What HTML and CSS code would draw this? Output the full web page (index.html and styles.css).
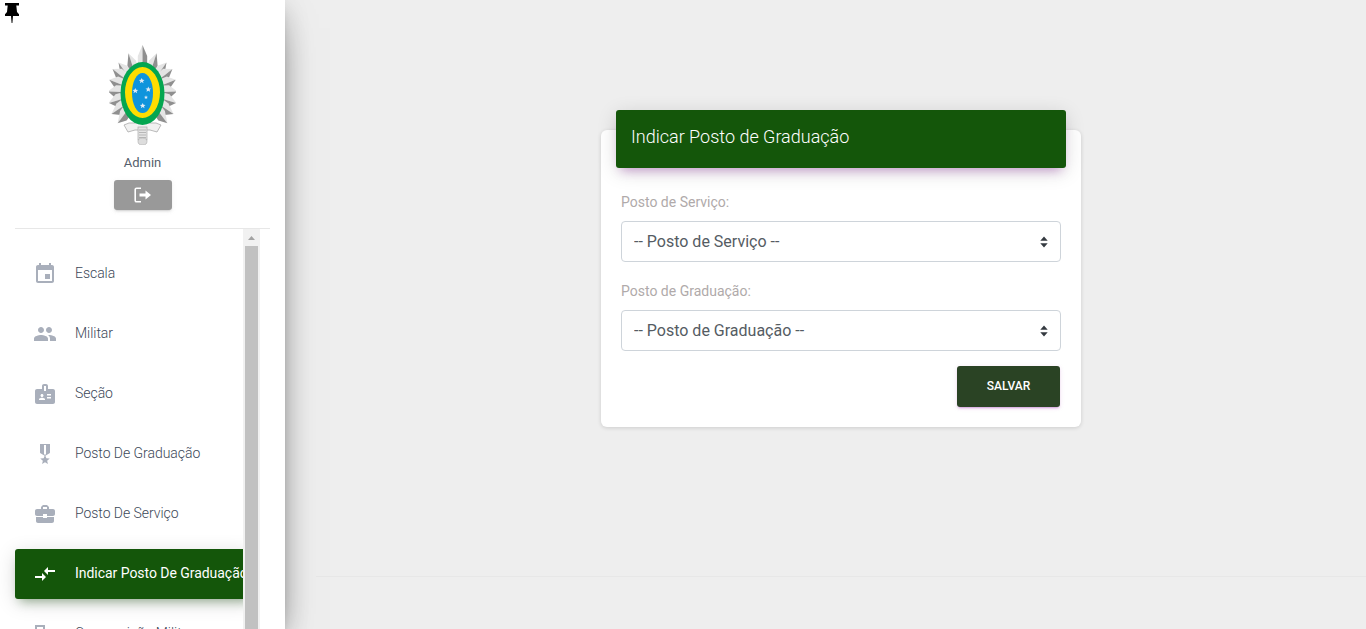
FILE: index.html
```html
<!DOCTYPE html>
<html lang="pt-BR">
<head>
<meta charset="utf-8">
<title>Indicar Posto de Graduação</title>
<link rel="stylesheet" href="styles.css">
</head>
<body>
<aside class="sidebar">
  <svg class="pin" viewBox="0 0 14 20" aria-hidden="true"><path d="M0 0h14v2.500h-2.700l.7 6.500 2 2.300v1.700H8L7.400 20H6.600L6 13H0v-1.700L2 9l.7-6.500H0z"/></svg>
  <div class="profile">
    <svg class="crest" viewBox="0 0 67 100" aria-hidden="true">
      <defs>
        <g id="ray"><polygon points="0,-48 -6.500,-37 -6.500,-29 0,-29" fill="#e4e4e4"/><polygon points="0,-48 6.500,-37 6.500,-29 0,-29" fill="#8f8f8f"/></g>
        <g id="rays-side">
          <use href="#ray" transform="translate(0 4) rotate(24)"/><use href="#ray" transform="translate(0 4) rotate(44)"/><use href="#ray" transform="rotate(60)"/>
          <use href="#ray" transform="rotate(74)"/><use href="#ray" transform="rotate(88)"/><use href="#ray" transform="rotate(102)"/>
          <use href="#ray" transform="rotate(116)"/><use href="#ray" transform="translate(0 -3) rotate(134)"/>
        </g>
        <polygon id="star" points="0,-2.800 .85,-.9 2.800,-.8 1.300,.5 1.800,2.500 0,1.400 -1.800,2.500 -1.300,.5 -2.800,-.8 -.85,-.9" fill="#dfeaf5"/>
      </defs>
      <path d="M20 78h27l5 2-4 7-7-2H26l-7 2-4-7z" fill="#f1f1f1" stroke="#a9a9a9" stroke-width=".8"/>
      <rect x="29" y="82" width="9" height="13" fill="#e4e4e4" stroke="#aaa" stroke-width=".7"/>
      <path d="M30 85h7M30 87.500h7M30 90h7M30 92.500h7" stroke="#999" stroke-width=".6"/>
      <ellipse cx="33.500" cy="96.500" rx="4.500" ry="3.500" fill="#ddd" stroke="#aaa" stroke-width=".6"/>
      <g transform="translate(33.500 48) scale(.72 1)">
        <use href="#ray"/>
        <use href="#rays-side"/>
        <use href="#rays-side" transform="scale(-1 1)"/>
      </g>
      <ellipse cx="33.500" cy="48.500" rx="22" ry="31.500" fill="#03a650"/>
      <ellipse cx="33.500" cy="47.500" rx="17.500" ry="25.500" fill="#fedd00"/>
      <ellipse cx="33.500" cy="48" rx="10.500" ry="20" fill="#0f94dc"/>
      <use href="#star" transform="translate(32.700 35.700)"/>
      <use href="#star" transform="translate(26.300 45.700)"/>
      <use href="#star" transform="translate(39.300 44.300)"/>
      <use href="#star" transform="translate(37 52.300) scale(.7)"/>
      <use href="#star" transform="translate(33.700 60.700)"/>
    </svg>
    <p class="profile-name">Admin</p>
    <button class="logout" type="button" aria-label="Sair">
      <svg viewBox="0 0 18 16" aria-hidden="true"><path class="logout-door" d="M7 1.200H2.600A1.400 1.400 0 0 0 1.200 2.600v10.800a1.400 1.400 0 0 0 1.400 1.400H7"/><path class="logout-arrow" d="M5.500 6.500h6V3.400L17 8l-5.500 4.600V9.500h-6z"/></svg>
    </button>
  </div>
  <div class="nav-wrap">
    <nav class="nav">
      <a class="nav-item"><svg class="nav-icon" viewBox="0 0 24 24"><path d="M17 12h-5v5h5v-5zM16 1v2H8V1H6v2H5c-1.110 0-1.990.9-1.990 2L3 19c0 1.100.89 2 2 2h14c1.100 0 2-.9 2-2V5c0-1.100-.9-2-2-2h-1V1h-2zm3 18H5V8h14v11z"/></svg><span>Escala</span></a>
      <a class="nav-item"><svg class="nav-icon" viewBox="0 0 24 24"><path d="M16 11c1.660 0 2.990-1.340 2.990-3S17.660 5 16 5c-1.660 0-3 1.340-3 3s1.340 3 3 3zm-8 0c1.660 0 2.990-1.340 2.990-3S9.660 5 8 5C6.340 5 5 6.340 5 8s1.340 3 3 3zm0 2c-2.330 0-7 1.170-7 3.500V19h14v-2.500c0-2.330-4.670-3.500-7-3.500zm8 0c-.29 0-.62.02-.97.05 1.160.84 1.970 1.970 1.970 3.450V19h6v-2.500c0-2.330-4.670-3.500-7-3.500z"/></svg><span>Militar</span></a>
      <a class="nav-item"><svg class="nav-icon" viewBox="0 0 24 24"><path d="M20 7h-5V4c0-1.100-.9-2-2-2h-2c-1.100 0-2 .9-2 2v3H4c-1.100 0-2 .9-2 2v11c0 1.100.9 2 2 2h16c1.100 0 2-.9 2-2V9c0-1.100-.9-2-2-2zM9 12c.83 0 1.500.67 1.500 1.500S9.830 15 9 15s-1.500-.67-1.500-1.500S8.170 12 9 12zm3 6H6v-.75c0-1 2-1.500 3-1.500s3 .5 3 1.500V18zm1-9h-2V4h2v5zm5 7.500h-4V15h4v1.500zm0-3h-4V12h4v1.500z"/></svg><span>Seção</span></a>
      <a class="nav-item"><svg class="nav-icon" viewBox="0 0 24 24"><path d="M17 10.430V2H7v8.430c0 .35.18.68.49.86l4.180 2.510-.99 2.340-3.410.29 2.590 2.240L9.070 22 12 20.230 14.930 22l-.78-3.330 2.590-2.240-3.410-.29-.99-2.340 4.180-2.510c.3-.18.48-.5.48-.86zm-4 1.800l-1 .6-1-.6V3h2v9.230z"/></svg><span>Posto De Graduação</span></a>
      <a class="nav-item"><svg class="nav-icon" viewBox="0 0 24 24"><path d="M10 16v-1H3.010L3 19c0 1.110.89 2 2 2h14c1.110 0 2-.89 2-2v-4h-7v1h-4zm10-9h-4.010V5l-2-2h-4l-2 2v2H4c-1.100 0-2 .9-2 2v3c0 1.110.89 2 2 2h6v-2h4v2h6c1.100 0 2-.9 2-2V9c0-1.100-.9-2-2-2zm-6 0h-4V5h4v2z"/></svg><span>Posto De Serviço</span></a>
      <a class="nav-item nav-item-active"><svg class="nav-icon" viewBox="0 0 24 24"><path d="M9.010 14H2v2h7.010v3L13 15l-3.990-4v3zm5.980-1v-3H22V8h-7.010V5L11 9l3.990 4z"/></svg><span>Indicar Posto De Graduação</span></a>
      <a class="nav-item"><svg class="nav-icon" viewBox="0 0 24 24"><path d="M2 3h10v18H2zm2 2v14h6V5z" fill-rule="evenodd"/></svg><span>Composição Militar</span></a>
    </nav>
    <div class="scrollbar" aria-hidden="true">
      <div class="scroll-button"><svg viewBox="0 0 9 5"><path d="M4.500 0L9 5H0z"/></svg></div>
      <div class="scroll-thumb"></div>
    </div>
  </div>
</aside>
<main class="main">
  <section class="card">
    <header class="card-header"><h1 class="card-title">Indicar Posto de Graduação</h1></header>
    <form class="card-body">
      <label class="field-label" for="servico">Posto de Serviço:</label>
      <div class="select-wrap">
        <select class="field-select" id="servico"><option>-- Posto de Serviço --</option></select>
        <svg class="select-arrow" viewBox="0 0 8 12" aria-hidden="true"><path d="M4 .5l3.700 4.300H.3zM4 11.500L.3 7.200h7.400z"/></svg>
      </div>
      <label class="field-label" for="graduacao">Posto de Graduação:</label>
      <div class="select-wrap">
        <select class="field-select" id="graduacao"><option>-- Posto de Graduação --</option></select>
        <svg class="select-arrow" viewBox="0 0 8 12" aria-hidden="true"><path d="M4 .5l3.700 4.300H.3zM4 11.500L.3 7.200h7.400z"/></svg>
      </div>
      <div class="form-actions"><button class="save" type="button">Salvar</button></div>
    </form>
  </section>
  <footer class="footer"></footer>
</main>
</body>
</html>
```

FILE: styles.css
```css
* { box-sizing: border-box; }
html, body { height: 100%; margin: 0; }
body {
  display: flex;
  overflow: hidden;
  background: #eee;
  color: #3c4858;
  font-family: Roboto, "Liberation Sans", sans-serif;
}

/* Sidebar */
.sidebar {
  position: relative;
  z-index: 2;
  display: flex;
  flex: none;
  flex-direction: column;
  width: 285px;
  height: 100%;
  background: #fff;
  box-shadow: 0 16px 38px -12px rgba(0,0,0,.56), 0 4px 25px rgba(0,0,0,.12), 0 8px 10px -5px rgba(0,0,0,.2);
}
.pin { position: absolute; top: 3px; left: 5px; width: 14px; height: 20px; fill: #000; }
.profile {
  display: flex;
  flex: none;
  flex-direction: column;
  align-items: center;
  height: 229px;
  margin: 0 15px;
  padding-top: 45px;
  border-bottom: 1px solid #e7e7e7;
}
.crest { display: block; width: 67px; height: 100px; }
.profile-name { margin: 9px 0 0; color: #555e6c; font-size: 13px; line-height: 17px; font-weight: 400; }
.logout {
  display: flex;
  align-items: center;
  justify-content: center;
  width: 58px;
  height: 30px;
  margin-top: 9px;
  padding: 0 0 1px;
  border: 0;
  border-radius: 3px;
  background: #999;
  box-shadow: 0 2px 2px rgba(153,153,153,.14), 0 3px 1px -2px rgba(153,153,153,.2), 0 1px 5px rgba(153,153,153,.12);
}
.logout svg { width: 18px; height: 16px; }
.logout-door { fill: none; stroke: #fff; stroke-width: 1.600; }
.logout-arrow { fill: #fff; }

.nav-wrap { display: flex; flex: 1; min-height: 0; padding-right: 25px; }
.nav {
  display: flex;
  flex: 1;
  flex-direction: column;
  min-width: 0;
  gap: 10px;
  padding: 20px 0 0 15px;
  overflow: hidden;
}
.nav-item {
  display: flex;
  flex: none;
  align-items: center;
  width: 240px;
  height: 50px;
  padding-left: 18px;
  border-radius: 3px;
  font-size: 14px;
  font-weight: 300;
  letter-spacing: -.04px;
  white-space: nowrap;
  color: #3c4858;
}
.nav-item span { margin-bottom: 2px; }
.nav-icon { flex: none; width: 24px; height: 24px; margin-right: 18px; fill: #a9afbb; }
.nav-item-active {
  background: #14560a;
  color: #fff;
  font-weight: 400;
  box-shadow: 0 4px 20px rgba(0,0,0,.14), 0 7px 10px -5px rgba(20,86,10,.4);
}
.nav-item-active .nav-icon { fill: #fff; }
.scrollbar { display: flex; flex: none; flex-direction: column; align-items: center; width: 17px; background: #f1f1f1; }
.scroll-button { display: flex; flex: none; align-items: center; justify-content: center; width: 100%; height: 17px; }
.scroll-button svg { width: 7px; height: 4px; fill: #a3a3a3; }
.scroll-thumb { flex: 1; width: 13px; background: #c1c1c1; }

/* Main */
.main {
  display: flex;
  flex: 1;
  flex-direction: column;
  align-items: center;
  min-width: 0;
  height: 100%;
  padding: 130px 0 0 31px;
}
.card {
  flex: none;
  width: 480px;
  height: 297px;
  border-radius: 6px;
  background: #fff;
  box-shadow: 0 1px 4px rgba(0,0,0,.14);
}
.card-header {
  display: flex;
  align-items: center;
  height: 58px;
  margin: -20px 15px 0;
  padding: 0 15px 4px;
  border-radius: 3px;
  background: #14560a;
  box-shadow: 0 4px 20px rgba(0,0,0,.14), 0 7px 10px -5px rgba(156,39,176,.4);
}
.card-title { margin: 0; color: #fff; font-size: 18px; line-height: 24px; font-weight: 300; }
.card-body { display: flex; flex-direction: column; padding: 25px 20px 0; }
.field-label { display: block; height: 28px; color: #b0aaaa; font-size: 14px; line-height: 18px; font-weight: 400; }
.select-wrap { position: relative; height: 41px; margin-bottom: 20px; }
.field-select {
  display: block;
  width: 100%;
  height: 100%;
  padding: 0 30px 0 12px;
  border: 1px solid #ced4da;
  border-radius: 4px;
  background: #fff;
  color: #555c63;
  font: 400 16px Roboto, "Liberation Sans", sans-serif;
  appearance: none;
}
.select-arrow { position: absolute; top: 15px; right: 13px; width: 8px; height: 12px; fill: #343a40; pointer-events: none; }
.form-actions { display: flex; justify-content: flex-end; margin: -5px 1px 0 0; }
.save {
  width: 103px;
  height: 41px;
  padding: 0 0 2px;
  border: 0;
  border-radius: 3px;
  background: #2a4324;
  color: #fff;
  font: 500 12px Roboto, "Liberation Sans", sans-serif;
  text-transform: uppercase;
  box-shadow: 0 2px 2px rgba(156,39,176,.14), 0 3px 1px -2px rgba(156,39,176,.2), 0 1px 5px rgba(156,39,176,.12);
}
.footer { flex: none; align-self: stretch; height: 53px; margin-top: auto; border-top: 1px solid #e7e7e7; }
```
